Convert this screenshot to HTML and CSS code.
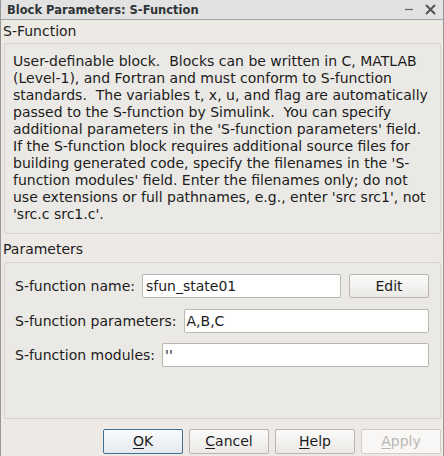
FILE: index.html
```html
<!DOCTYPE html>
<html>
<head>
<meta charset="utf-8">
<link rel="stylesheet" href="styles.css">
</head>
<body>
<div class="window">
  <div class="titlebar">
    <span class="title">Block Parameters: S-Function</span>
    <div class="controls">
      <svg class="min" width="10" height="10" viewBox="0 0 10 10"><path d="M1 4.5H9" stroke="#6a6a6a" stroke-width="1.3"/></svg>
      <svg class="close" width="11" height="11" viewBox="0 0 11 11"><path d="M1 1L10 10M10 1L1 10" stroke="#555" stroke-width="2"/></svg>
    </div>
  </div>
  <div class="content">
    <div class="group-label">S-Function</div>
    <div class="panel desc"><div class="desc-text">User-definable block.  Blocks can be written in C, MATLAB
(Level-1), and Fortran and must conform to S-function
standards.  The variables t, x, u, and flag are automatically
passed to the S-function by Simulink.  You can specify
additional parameters in the 'S-function parameters' field.
If the S-function block requires additional source files for
building generated code, specify the filenames in the 'S-
function modules' field. Enter the filenames only; do not
use extensions or full pathnames, e.g., enter 'src src1', not
'src.c src1.c'.</div></div>
    <div class="group-label params-label">Parameters</div>
    <div class="panel params">
      <div class="row">
        <span class="lbl">S-function name:</span>
        <div class="input w-name">sfun_state01</div>
        <div class="btn edit">Edit</div>
      </div>
      <div class="row row2">
        <span class="lbl">S-function parameters:</span>
        <div class="input grow">A,B,C</div>
      </div>
      <div class="row row3">
        <span class="lbl">S-function modules:</span>
        <div class="input grow">''</div>
      </div>
    </div>
    <div class="buttons">
      <div class="btn dlg default"><u>O</u>K</div>
      <div class="btn dlg"><u>C</u>ancel</div>
      <div class="btn dlg"><u>H</u>elp</div>
      <div class="btn dlg disabled"><u>A</u>pply</div>
    </div>
  </div>
</div>
</body>
</html>
```

FILE: styles.css
```css
html, body {
  margin: 0;
  padding: 0;
  background: #edeae6;
}
body {
  font-family: "DejaVu Sans", sans-serif;
  font-size: 14px;
  color: #1c1c1c;
}
.window {
  width: 444px;
  height: 456px;
  box-sizing: border-box;
  border-left: 1px solid #979797;
  border-right: 1px solid #979797;
  background: #edeae6;
  overflow: hidden;
}
.titlebar {
  height: 20px;
  box-sizing: border-box;
  background: #e2e2e2;
  border-bottom: 1px solid #a3a3a3;
  display: flex;
  align-items: center;
  justify-content: space-between;
  padding: 0 7px 0 6px;
}
.title {
  font-weight: bold;
  font-size: 11.5px;
  color: #2e3436;
  white-space: nowrap;
}
.controls {
  display: flex;
  align-items: center;
  gap: 11px;
}
.content {
  padding: 2px 2px 0 3px;
}
.group-label {
  height: 18px;
  line-height: 18px;
  margin-left: -1px;
  white-space: nowrap;
}
.panel {
  border: 1px solid #d6d3ce;
  border-radius: 2px;
  background: #ebe9e5;
  box-sizing: border-box;
}
.desc {
  margin-top: 3px;
  height: 191px;
  padding: 9px 0 0 8px;
}
.desc-text {
  white-space: pre;
  line-height: 17px;
}
.params-label {
  margin-top: 6px;
}
.params {
  margin-top: 4px;
  height: 157px;
  padding: 11px 0 0 10px;
}
.row {
  display: flex;
  align-items: center;
  height: 24px;
}
.row2 {
  margin-top: 11px;
  padding-right: 11px;
}
.row3 {
  margin-top: 10px;
  padding-right: 11px;
}
.lbl {
  margin-right: 7px;
  white-space: nowrap;
  flex-shrink: 0;
}
.input {
  height: 24px;
  box-sizing: border-box;
  border: 1px solid #bbb7b1;
  border-radius: 2px;
  background: #fff;
  padding-left: 2px;
  line-height: 22px;
  white-space: nowrap;
}
.w-name {
  width: 199px;
  flex-shrink: 0;
  padding-left: 3px;
}
.grow {
  flex: 1;
}
.btn {
  box-sizing: border-box;
  border: 1px solid #b9b5af;
  border-radius: 2px;
  background: linear-gradient(#fafaf9, #ebe9e6);
  text-align: center;
  line-height: 23px;
  white-space: nowrap;
}
.edit {
  width: 80px;
  height: 24px;
  margin-left: 8px;
  flex-shrink: 0;
  line-height: 22px;
}
.buttons {
  display: flex;
  justify-content: flex-end;
  gap: 6px;
  padding-top: 10px;
}
.dlg {
  width: 80px;
  height: 25px;
}
.dlg u {
  text-decoration-thickness: 1px;
  text-underline-offset: 2px;
}
.default {
  border-color: #3f6f97;
  background: linear-gradient(#fafbfc, #e4e9ee);
}
.disabled {
  color: #bab7b3;
  background: #f8f7f5;
  border-color: #d0cdc8;
}
```
